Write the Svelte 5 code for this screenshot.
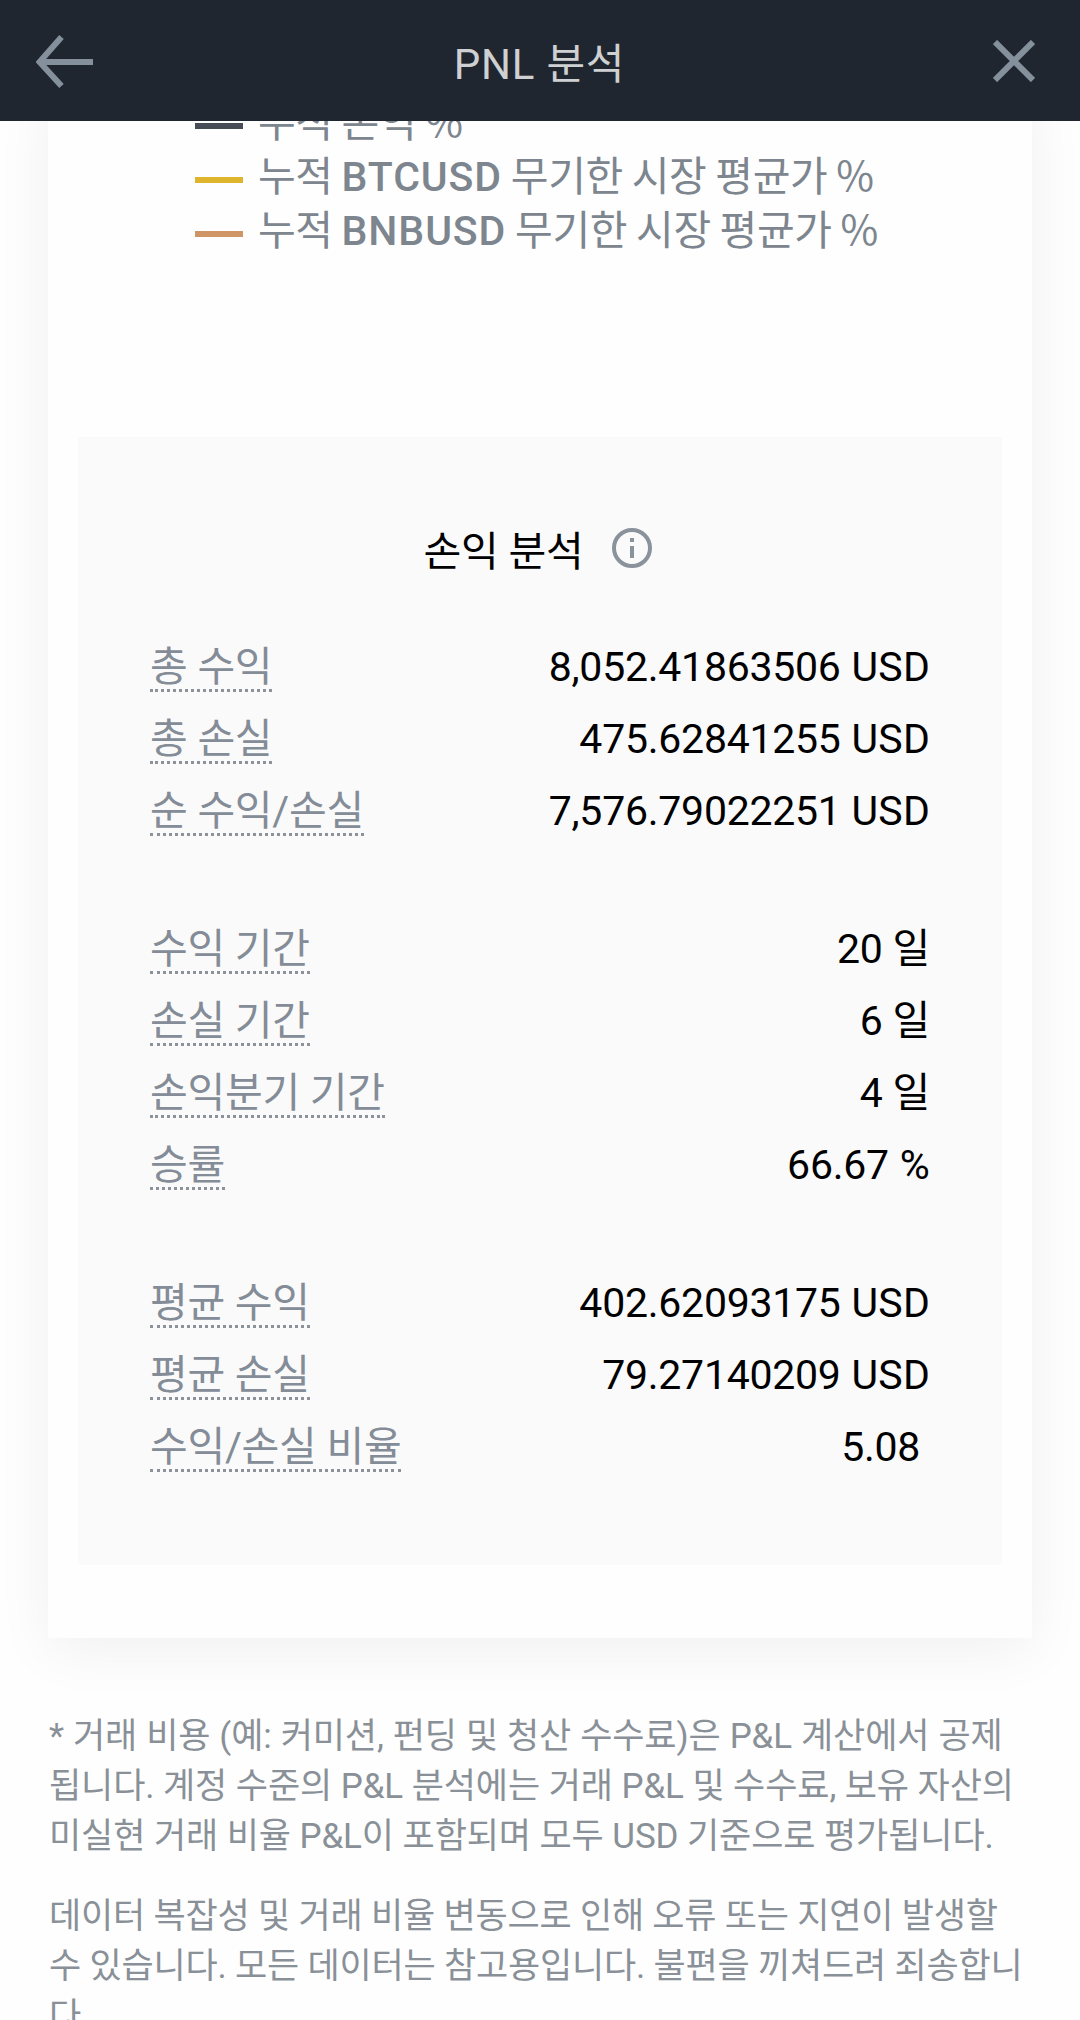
<script>
	// 범례
	const legends = [
		{ color: '#474d57', before: '누적 손익 %', symbol: '', after: '' },
		{ color: '#dfb52e', before: '누적', symbol: 'BTCUSD', after: '무기한 시장 평균가 %' },
		{ color: '#cf9565', before: '누적', symbol: 'BNBUSD', after: '무기한 시장 평균가 %' }
	];

	// 손익 분석 항목
	const groups = [
		[
			{ label: '총 수익', value: '8,052.41863506', unit: 'USD' },
			{ label: '총 손실', value: '475.62841255', unit: 'USD' },
			{ label: '순 수익/손실', value: '7,576.79022251', unit: 'USD' }
		],
		[
			{ label: '수익 기간', value: '20', unit: '일' },
			{ label: '손실 기간', value: '6', unit: '일' },
			{ label: '손익분기 기간', value: '4', unit: '일' },
			{ label: '승률', value: '66.67', unit: '%' }
		],
		[
			{ label: '평균 수익', value: '402.62093175', unit: 'USD' },
			{ label: '평균 손실', value: '79.27140209', unit: 'USD' },
			{ label: '수익/손실 비율', value: '5.08', unit: '' }
		]
	];
</script>

<main class="page">
	<header class="header">
		<svg class="header__back" width="58" height="54" viewBox="0 0 58 54">
			<path d="M25.5 2 L3.5 27 L25.5 51 M4 27 H57" />
		</svg>
		<h1 class="header__title">PNL 분석</h1>
		<svg class="header__close" width="42" height="42" viewBox="0 0 42 42">
			<path d="M2 2 L40 40 M40 2 L2 40" />
		</svg>
	</header>

	<section class="content">
		<section class="card">
			<ul class="legend">
				{#each legends as legend}
					<li class="legend__item">
						<span class="legend__line" style="background: {legend.color}"></span>
						<span class="legend__text">{legend.before} <b>{legend.symbol}</b> {legend.after}</span>
					</li>
				{/each}
			</ul>

			<section class="panel">
				<div class="panel__title">
					<h2>손익 분석</h2>
					<svg width="40" height="40" viewBox="0 0 40 40">
						<circle cx="20" cy="20" r="18" />
						<path d="M20 10 V14 M20 18 V30" />
					</svg>
				</div>
				{#each groups as group}
					<dl class="group">
						{#each group as row}
							<div class="group__row">
								<dt>{row.label}</dt>
								<dd>{row.value}&nbsp;<span class:latin={row.unit === 'USD' || row.unit === '%'}>{row.unit}</span></dd>
							</div>
						{/each}
					</dl>
				{/each}
			</section>
		</section>

		<section class="notes">
			<p>
				<span class="notes__first">* 거래 비용 (예: 커미션, 펀딩 및 청산 수수료)은 P&amp;L 계산에서 공제</span><br />
				됩니다. 계정 수준의 P&amp;L 분석에는 거래 P&amp;L 및 수수료, 보유 자산의<br />
				미실현 거래 비율 P&amp;L이 포함되며 모두 USD 기준으로 평가됩니다.
			</p>
			<p class="notes__notice">
				데이터 복잡성 및 거래 비율 변동으로 인해 오류 또는 지연이 발생할<br />
				수 있습니다. 모든 데이터는 참고용입니다. 불편을 끼쳐드려 죄송합니<br />
				다.
			</p>
		</section>
	</section>
</main>

<style>
	:global(body) {
		margin: 0;
		background: #fefefe;
	}
	.page {
		display: flex;
		flex-direction: column;
		width: 1080px;
		height: 2020px;
		overflow: hidden;
		font-family: Roboto, "Noto Sans CJK KR", sans-serif;
		font-size: 41px;
		letter-spacing: -0.25px;
		white-space: nowrap;
	}
	.header {
		display: flex;
		flex: none;
		justify-content: space-between;
		align-items: center;
		box-sizing: border-box;
		height: 121px;
		padding: 2px 45px 0 36px;
		background: #202630;
	}
	.header svg {
		fill: none;
		stroke: #84909c;
		stroke-width: 6;
	}
	.header__close {
		margin-top: -2px;
	}
	.header__title {
		margin: -2px 0 0 -8px;
		color: #cfd0d2;
		font-size: 42px;
		font-weight: 400;
		letter-spacing: 0.8px;
	}
	.content {
		flex: 1;
		min-height: 0;
		overflow: hidden;
	}
	.card {
		display: flex;
		flex-direction: column;
		box-sizing: border-box;
		height: 1553px;
		margin: -36px 48px 0;
		padding: 14px 30px 73px;
		background: #fefefe;
		box-shadow: 0 12px 54px rgba(0, 0, 0, 0.06);
	}
	.legend {
		margin: 0;
		padding: 0 0 0 117px;
		height: 339px;
		list-style: none;
		color: #7d858e;
	}
	.legend__item {
		display: flex;
		align-items: center;
		gap: 15px;
		height: 54px;
	}
	.legend__line {
		width: 48px;
		height: 6px;
	}
	.legend__text {
		margin-top: -11px;
		font-family: "Noto Sans CJK KR", sans-serif;
		line-height: 50px;
		letter-spacing: -0.35px;
	}
	.legend b {
		font-family: Roboto, sans-serif;
		font-weight: 500;
		letter-spacing: 0.9px;
	}
	.panel {
		flex: 1;
		padding: 84px 72px 0 72px;
		border-radius: 3px;
		background: #fafafa;
	}
	.panel__title {
		display: flex;
		justify-content: center;
		align-items: center;
		gap: 29px;
		height: 60px;
		margin: 0 4px 66px 0;
	}
	.panel__title h2 {
		margin: -6px 0 0;
		font-size: 41px;
		font-weight: 400;
	}
	.panel__title svg {
		margin-top: -6px;
		fill: none;
		stroke: #8a929c;
		stroke-width: 4;
	}
	.group {
		margin: 0 0 66px;
	}
	.group__row {
		display: flex;
		justify-content: space-between;
		align-items: flex-start;
		height: 72px;
	}
	.group dt {
		height: 42px;
		border-bottom: 3px dotted #8c9299;
		color: #848c97;
		line-height: 40px;
	}
	.group dd {
		margin: 0;
		color: #000;
		line-height: 41px;
	}
	.group .latin {
		margin-left: 1px;
		letter-spacing: 0.2px;
	}
	.notes {
		padding: 74px 48px 0 49px;
		color: #899097;
		font-size: 35px;
		letter-spacing: -0.1px;
		line-height: 50px;
	}
	.notes p {
		margin: 0 0 30px;
	}
	.notes__first {
		word-spacing: 0.4px;
	}
	.notes .notes__notice {
		letter-spacing: -0.2px;
	}
</style>
